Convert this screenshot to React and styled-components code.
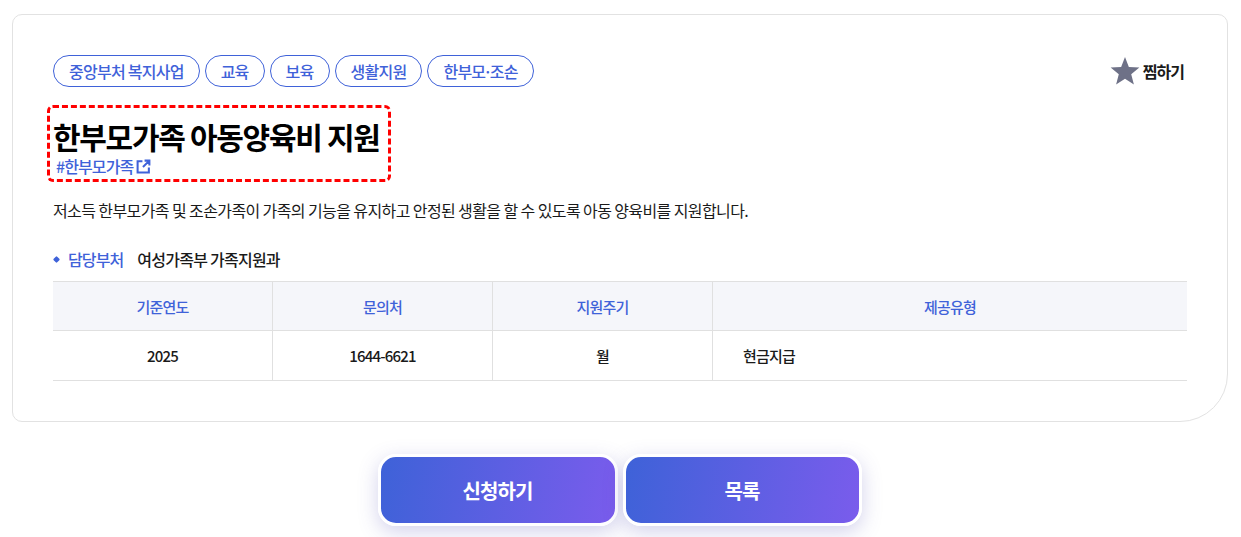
import React from "react";
import styled, { createGlobalStyle } from "styled-components";

const Global = createGlobalStyle`
  html, body { margin: 0; padding: 0; background: #fff; }
  body { font-family: "Noto Sans CJK KR", "Noto Sans", sans-serif; color: #111; overflow: hidden; }
`;
const Page = styled.div`
  width: 1241px; height: 537px; box-sizing: border-box; padding: 14px 13px 0 12px; overflow: hidden;
`;
const Card = styled.section`
  box-sizing: border-box; height: 408px; padding: 40px 40px 0;
  border: 1px solid #e2e2e2; border-radius: 10px 10px 48px 10px; background: #fff;
`;
const TopRow = styled.div`
  display: flex; justify-content: space-between; align-items: center; height: 32px;
`;
const Tags = styled.div` display: flex; gap: 5px; `;
const Tag = styled.span`
  box-sizing: border-box; height: 32px; padding: 0 15px; display: flex; align-items: center;
  border: 1px solid #3f62d9; border-radius: 16px; color: #3f62d9;
  font-size: 16px; font-weight: 500; letter-spacing: -0.75px; white-space: nowrap;
`;
const Mid = styled.span` margin: 0 -2px; `;
const Fav = styled.div`
  display: flex; align-items: center; gap: 3px; margin-right: 3px;
  font-size: 16px; font-weight: 700; letter-spacing: -1px; color: #1a1a1a;
`;
const TitleBox = styled.div`
  width: fit-content; box-sizing: border-box; margin: 21px 0 0 -3px; padding: 0 8px 0 3px; height: 71px;
  outline: 3px dashed #f00; border-radius: 3px;
`;
const Title = styled.h2`
  margin: 0; padding-top: 9px; font-size: 30px; line-height: 38px; font-weight: 700; letter-spacing: -1.3px; color: #000;
`;
const HashLink = styled.a`
  display: flex; align-items: center; gap: 3px; margin: 1px 0 0 3px; height: 20px; line-height: 20px;
  font-size: 16px; font-weight: 500; letter-spacing: -0.9px; color: #3f62d9;
`;
const Desc = styled.p`
  margin: 20px 0 0; font-size: 16px; line-height: 22px; font-weight: 400; letter-spacing: -0.6px; color: #1a1a1a;
`;
const Dept = styled.div`
  display: flex; align-items: center; margin-top: 26px; height: 24px; font-size: 16px; font-weight: 500; letter-spacing: -0.9px;
`;
const Dot = styled.i`
  width: 5px; height: 5px; background: #3f62d9; transform: rotate(45deg); margin: 0 9px 0 1px; border-radius: 1px;
`;
const DeptLabel = styled.span` color: #3f62d9; margin-right: 14px; `;
const DeptName = styled.span` color: #1a1a1a; letter-spacing: -0.75px; `;
const Grid = styled.div`
  display: grid; grid-template-columns: 220px 220px 220px 1fr; margin-top: 10px; border-top: 1px solid #e0e0e0;
`;
const Head = styled.div`
  height: 48px; display: flex; align-items: center; justify-content: center; background: #f5f6fa;
  border-bottom: 1px solid #e0e0e0; border-right: ${p => (p.$last ? "none" : "1px solid #e0e0e0")};
  color: #3f62d9; font-size: 15px; font-weight: 500; letter-spacing: -0.8px;
`;
const Cell = styled.div`
  height: 49px; display: flex; align-items: center; justify-content: ${p => (p.$left ? "flex-start" : "center")};
  padding-left: ${p => (p.$left ? "30px" : "0")};
  border-bottom: 1px solid #e0e0e0; border-right: ${p => (p.$left ? "none" : "1px solid #e0e0e0")};
  color: #1a1a1a; font-size: 15px; font-weight: 500; letter-spacing: -0.8px;
`;
const Actions = styled.div` display: flex; justify-content: center; gap: 5px; margin: 32px 0 0 -1px; `;
const Button = styled.button`
  box-sizing: border-box; width: ${p => p.$w}px; height: 72px; border: 3px solid #fff; border-radius: 18px;
  background: linear-gradient(100deg, #3e62d8 0%, #7a5cec 100%);
  box-shadow: 0 6px 20px rgba(80, 75, 180, 0.25);
  color: #fff; font: 700 20px "Noto Sans CJK KR", sans-serif; letter-spacing: -0.9px;
`;

const Star = () => (
  <svg width="30" height="30" viewBox="0 0 28 28"><path d="M14 1l3.600 9.200 9.800.6-7.600 6.200 2.500 9.500L14 21.300 5.700 26.500l2.500-9.500L.6 10.800l9.800-.6z" fill="#6e7187" /></svg>
);
const External = () => (
  <svg width="15" height="15" viewBox="0 0 14 14" fill="none" stroke="#3f62d9" strokeWidth="1.9">
    <path d="M6 2H1.500v10.500H12V8M8 1.500h4.500V6M12.500 1.500L6.500 7.500" />
  </svg>
);

export default function App() {
  return (
    <Page>
      <Global />
      <Card>
        <TopRow>
          <Tags>
            <Tag>중앙부처 복지사업</Tag>
            <Tag>교육</Tag>
            <Tag>보육</Tag>
            <Tag>생활지원</Tag>
            <Tag><span>한부모<Mid>·</Mid>조손</span></Tag>
          </Tags>
          <Fav><Star />찜하기</Fav>
        </TopRow>
        <TitleBox>
          <Title>한부모가족 아동양육비 지원</Title>
          <HashLink>#한부모가족<External /></HashLink>
        </TitleBox>
        <Desc>저소득 한부모가족 및 조손가족이 가족의 기능을 유지하고 안정된 생활을 할 수 있도록 아동 양육비를 지원합니다.</Desc>
        <Dept><Dot /><DeptLabel>담당부처</DeptLabel><DeptName>여성가족부 가족지원과</DeptName></Dept>
        <Grid>
          <Head>기준연도</Head><Head>문의처</Head><Head>지원주기</Head><Head $last>제공유형</Head>
          <Cell>2025</Cell><Cell>1644-6621</Cell><Cell>월</Cell><Cell $left>현금지급</Cell>
        </Grid>
      </Card>
      <Actions>
        <Button $w={240}>신청하기</Button>
        <Button $w={239}>목록</Button>
      </Actions>
    </Page>
  );
}
